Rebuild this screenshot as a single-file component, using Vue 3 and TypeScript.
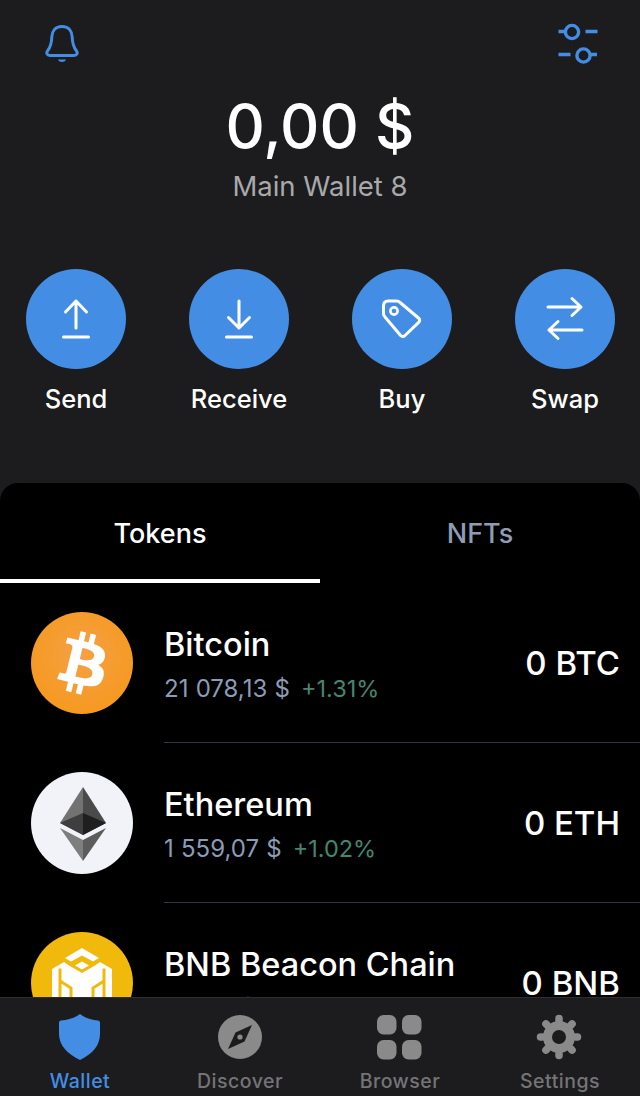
<script setup lang="ts">
interface Token {
  name: string
  price: string
  change: string
  amount: string
  logo: "btc" | "eth" | "bnb"
}

const actions = [
  { label: "Send", icon: "send" },
  { label: "Receive", icon: "receive" },
  { label: "Buy", icon: "buy" },
  { label: "Swap", icon: "swap" },
]

const tokens: Token[] = [
  { name: "Bitcoin", price: "21 078,13 $", change: "+1.31%", amount: "0 BTC", logo: "btc" },
  { name: "Ethereum", price: "1 559,07 $", change: "+1.02%", amount: "0 ETH", logo: "eth" },
  { name: "BNB Beacon Chain", price: "297,16 $", change: "+0.84%", amount: "0 BNB", logo: "bnb" },
]

const navItems = [
  { label: "Wallet", icon: "wallet" },
  { label: "Discover", icon: "discover" },
  { label: "Browser", icon: "browser" },
  { label: "Settings", icon: "settings" },
]

const gearTeeth = [0, 45, 90, 135, 180, 225, 270, 315]
</script>

<template>
  <div class="phone">
    <header class="top">
      <div class="top-icons">
        <svg class="bell" width="34" height="38" viewBox="0 0 34 38" fill="none" stroke="#438ee4" stroke-width="3">
          <path d="M17 1.500C10 1.500 7 6.500 6.800 12c-.2 6-.8 9.500-4 13.500C.8 28 2 30.500 5 30.500h24c3 0 4.200-2.500 2.200-5-3.200-4-3.800-7.500-4-13.500C27 6.500 24 1.500 17 1.500z" stroke-linejoin="round" />
          <path d="M13 34.500h8c-.8 1.800-2.200 2.500-4 2.500s-3.200-.7-4-2.500z" fill="#438ee4" stroke="none" />
        </svg>
        <svg width="42" height="42" viewBox="0 0 42 42" fill="none" stroke="#438ee4" stroke-width="3.400">
          <circle cx="16" cy="9" r="6.600" />
          <circle cx="27.500" cy="32.500" r="6.600" />
          <path d="M2.500 8.500h7M29.500 8.500h12M2.500 31.500h12M34 31.500h7" />
        </svg>
      </div>
      <div class="balance">0,00 $</div>
      <div class="wallet-name">Main Wallet 8</div>
    </header>

    <div class="actions">
      <div v-for="a in actions" :key="a.label" class="action">
        <div class="action-circle">
          <svg width="100" height="100" viewBox="0 0 100 100" fill="none" stroke="#fff" stroke-width="3" stroke-linecap="round" stroke-linejoin="round">
            <template v-if="a.icon === 'send'">
              <path d="M50 32v27M39.500 43 50 32l10.500 11" />
              <path d="M37.500 68h25" />
            </template>
            <template v-else-if="a.icon === 'receive'">
              <path d="M50 32v27M39.500 48.500 50 59l10.500-10.500" />
              <path d="M37.500 68h25" />
            </template>
            <template v-else-if="a.icon === 'buy'">
              <path d="M36 32h8.500c1.500 0 2.600.5 3.600 1.500L66.500 49c1.500 1.300 1.500 3 .2 4.400L53 66.500c-1.300 1.400-3 1.400-4.400 0L33 48c-1-1-1.500-2.200-1.500-3.600V37c0-3 1.500-5 4.500-5z" />
              <circle cx="42" cy="42" r="3.600" stroke-width="2.600" />
            </template>
            <template v-else>
              <path d="M33 38h33M57 29.500 66 38l-9 8.500" />
              <path d="M67 61H34M43 52.500 34 61l9 8.500" />
            </template>
          </svg>
        </div>
        <span class="action-label">{{ a.label }}</span>
      </div>
    </div>

    <main class="panel">
      <div class="tabs">
        <div class="tab active">Tokens</div>
        <div class="tab">NFTs</div>
      </div>

      <div v-for="t in tokens" :key="t.name" class="row">
        <div class="logo-cell">
          <svg width="102" height="102" viewBox="0 0 102 102">
            <template v-if="t.logo === 'btc'">
              <defs>
                <radialGradient id="btcFill" cx="0.5" cy="0.42" r="0.6">
                  <stop offset="0" stop-color="#f5a044" />
                  <stop offset="1" stop-color="#f6991f" />
                </radialGradient>
              </defs>
              <circle cx="51" cy="51" r="51" fill="url(#btcFill)" />
              <g transform="scale(3.1875)">
                <path fill="#fff" d="M23.189 14.02c.314-2.096-1.283-3.223-3.465-3.975l.708-2.84-1.728-.43-.69 2.765c-.454-.114-.92-.22-1.385-.326l.695-2.783L15.596 6l-.708 2.839c-.376-.086-.746-.17-1.104-.26l.002-.009-2.384-.595-.46 1.846s1.283.294 1.256.312c.7.175.826.638.805 1.006l-.806 3.235c.048.012.11.03.18.057l-.183-.045-1.13 4.532c-.086.212-.303.531-.793.41.018.025-1.256-.313-1.256-.313l-.858 1.978 2.25.561c.418.105.828.215 1.231.318l-.715 2.872 1.727.43.708-2.84c.472.127.93.245 1.378.357l-.706 2.828 1.728.43.715-2.866c2.948.558 5.164.333 6.097-2.333.752-2.146-.037-3.385-1.588-4.192 1.13-.26 1.98-1.003 2.207-2.538zm-3.95 5.538c-.533 2.147-4.148.986-5.32.695l.95-3.805c1.172.293 4.929.872 4.37 3.11zm.535-5.569c-.487 1.953-3.495.96-4.47.717l.86-3.45c.975.243 4.118.696 3.61 2.733z" />
              </g>
            </template>
            <template v-else-if="t.logo === 'eth'">
              <circle cx="51" cy="51" r="51" fill="#f1f3f8" />
              <path d="M52 15 29 51l23 12z" fill="#727272" />
              <path d="M52 15l23 36-23 12z" fill="#4a4a4a" />
              <path d="M52 41 29 51l23 12z" fill="#3e3e3e" />
              <path d="M52 41l23 10-23 12z" fill="#1f1f1f" />
              <path d="M29 56l23 33V68z" fill="#7e7e7e" />
              <path d="M75 56 52 89V68z" fill="#5c5c5c" />
            </template>
            <template v-else>
              <circle cx="51" cy="51" r="51" fill="#f0b90b" />
              <path d="M51 16 68 26 62 29.500 51 23.500 40 29.500 34 26z" fill="#fff" />
              <path d="M51 29.500 58 33.500 51 37.500 44 33.500z" fill="#fff" />
              <path d="M33 30 38 33.500 51 41V70H21V37z" fill="#fff" />
              <path d="M69 30 64 33.500 51 41V70H81V37z" fill="#fff" />
              <path d="M29 36.500V49L40 56V70M73 36.500V49L62 56V70M29 49V70M73 49V70" fill="none" stroke="#f0b90b" stroke-width="3" />
            </template>
          </svg>
        </div>
        <div class="row-main">
          <div class="row-text">
            <div class="token-name">{{ t.name }}</div>
            <div class="token-sub">
              <span class="token-price">{{ t.price }}</span>
              <span class="token-change">{{ t.change }}</span>
            </div>
          </div>
          <div class="token-amount">{{ t.amount }}</div>
        </div>
      </div>
    </main>

    <nav class="nav">
      <div v-for="n in navItems" :key="n.label" class="nav-item" :class="{ on: n.icon === 'wallet' }">
        <svg width="48" height="48" viewBox="0 0 48 48">
          <path v-if="n.icon === 'wallet'" fill="#438ee4" d="M24 1c5 4 11 6 18 6.500 1 0 2 1 2 2v11c0 12-7 20-20 26.500C11 40.500 3 32.500 3 20.500v-11c0-1 1-2 2-2C12 7 19 5 24 1z" />
          <template v-else-if="n.icon === 'discover'">
            <circle cx="24" cy="24" r="22" fill="#8a8a8a" />
            <path fill="#1c1c1e" d="M36 12 28.500 28.500 12 36l7.500-16.500z" />
            <circle cx="24" cy="24" r="2.600" fill="#8a8a8a" />
          </template>
          <template v-else-if="n.icon === 'browser'">
            <rect x="1" y="2" width="19.500" height="19.500" rx="6.500" fill="#8a8a8a" />
            <rect x="26" y="2" width="19.500" height="19.500" rx="6.500" fill="#8a8a8a" />
            <rect x="1" y="27" width="19.500" height="19.500" rx="6.500" fill="#8a8a8a" />
            <rect x="26" y="27" width="19.500" height="19.500" rx="6.500" fill="#8a8a8a" />
          </template>
          <template v-else>
            <circle cx="23" cy="24" r="11.500" fill="none" stroke="#8a8a8a" stroke-width="9" />
            <line v-for="deg in gearTeeth" :key="deg" x1="23" y1="7" x2="23" y2="5.500" stroke="#8a8a8a" stroke-width="7.500" stroke-linecap="round" :transform="`rotate(${deg} 23 24)`" />
          </template>
        </svg>
        <span class="nav-label">{{ n.label }}</span>
      </div>
    </nav>
  </div>
</template>

<style scoped>
.phone {
  width: 640px;
  height: 1096px;
  display: flex;
  flex-direction: column;
  overflow: hidden;
  background: #1c1c1e;
  font-family: Inter, "Liberation Sans", sans-serif;
  color: #fff;
}

.top {
  height: 209px;
  padding-top: 23px;
  box-sizing: border-box;
  display: flex;
  flex-direction: column;
  align-items: center;
}

.top-icons {
  align-self: stretch;
  display: flex;
  justify-content: space-between;
  height: 42px;
  padding: 0 42px 0 45px;
}

.bell {
  margin-top: 2px;
}

.balance {
  margin-top: 24px;
  font-size: 61px;
  line-height: 74px;
  font-weight: 500;
}

.wallet-name {
  margin-top: 6px;
  font-size: 27.5px;
  line-height: 34px;
  color: #a9a9ab;
}

.actions {
  margin-top: 60px;
  height: 214px;
  padding: 0 25px 0 26px;
  display: flex;
  justify-content: space-between;
  align-items: flex-start;
}

.action {
  width: 100px;
  display: flex;
  flex-direction: column;
  align-items: center;
}

.action-circle {
  width: 100px;
  height: 100px;
  border-radius: 50%;
  background: #438ee4;
}

.action-circle svg {
  display: block;
}

.action-label {
  margin-top: 14px;
  font-size: 25.5px;
  line-height: 32px;
  font-weight: 500;
  white-space: nowrap;
}

.panel {
  flex: 1;
  min-height: 0;
  overflow: hidden;
  background: #000;
  border-radius: 18px 18px 0 0;
}

.tabs {
  height: 100px;
  display: flex;
}

.tab {
  flex: 1;
  display: flex;
  align-items: center;
  justify-content: center;
  box-sizing: border-box;
  font-size: 27px;
  font-weight: 500;
  color: #8f9db4;
}

.tab.active {
  color: #fff;
  border-bottom: 4px solid #fff;
  padding-top: 4px;
}

.row {
  height: 160px;
  display: flex;
}

.logo-cell {
  width: 164px;
  flex: none;
  padding: 29px 0 0 31px;
  box-sizing: border-box;
}

.logo-cell svg {
  display: block;
}

.row-main {
  flex: 1;
  display: flex;
  justify-content: space-between;
  align-items: center;
  padding-right: 20px;
  border-bottom: 1px solid #343741;
}

.row-text {
  margin-top: 3px;
}

.token-name {
  font-size: 32.5px;
  line-height: 40px;
  font-weight: 500;
}

.token-sub {
  margin-top: 9px;
  font-size: 23.5px;
  line-height: 30px;
  display: flex;
  gap: 11px;
}

.token-price {
  color: #8b9cb6;
  font-size: 24px;
  word-spacing: 0.5px;
}

.token-change {
  color: #44876f;
}

.token-amount {
  font-size: 33px;
  font-weight: 500;
}

.nav {
  height: 99px;
  flex: none;
  display: flex;
  background: #1c1c1e;
  border-top: 1px solid #2e2e30;
  box-sizing: border-box;
}

.nav-item {
  flex: 1;
  display: flex;
  flex-direction: column;
  align-items: center;
  padding-top: 15px;
  color: #747477;
}

.nav-item svg {
  display: block;
}

.nav-item.on {
  color: #438ee4;
}

.nav-label {
  margin-top: 8px;
  font-size: 19.5px;
  line-height: 24px;
  font-weight: 500;
  letter-spacing: 0.5px;
}
</style>

<style>
html,
body {
  background: #1c1c1e;
}
</style>
